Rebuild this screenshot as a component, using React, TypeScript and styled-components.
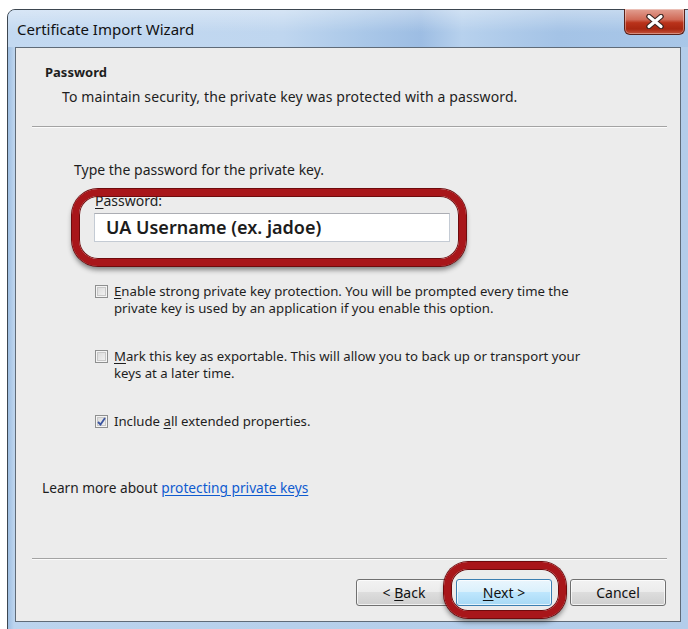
import styled, { createGlobalStyle } from "styled-components";

const GlobalStyle = createGlobalStyle`
  html, body {
    margin: 0;
    padding: 0;
    background: #ffffff;
    overflow: hidden;
  }
  body {
    font-family: "Noto Sans", "Open Sans", "DejaVu Sans", sans-serif;
    color: #1e1e1e;
  }
`;

const Frame = styled.div`
  position: relative;
  box-sizing: border-box;
  width: 690px;
  height: 630px;
  margin: 9px 0 0 7px;
  border: 1px solid #3d4650;
  border-radius: 8px 8px 0 0;
  background: linear-gradient(90deg, #9fbfe2 0px, #bcd4ee 6px, #b7d0eb 40%, #b3cdea 100%);
  display: flex;
  flex-direction: column;
  padding: 0 7px 0 7px;
`;

const TitleBar = styled.div`
  height: 37px;
  margin: 0 -7px;
  padding: 0 5px 0 9px;
  display: flex;
  justify-content: space-between;
  align-items: flex-start;
  border-radius: 7px 7px 0 0;
  background:
    linear-gradient(180deg, rgba(255, 255, 255, 0.35) 0%, rgba(255, 255, 255, 0) 60%),
    linear-gradient(
      90deg,
      #c3d9f1 0%,
      #bfd6ef 40%,
      #a9c7e8 52%,
      #9dbde3 60%,
      #b7d1ed 66%,
      #a4c3e6 80%,
      #a9c7e8 100%
    );
`;

const Title = styled.span`
  margin-top: 9px;
  font-size: 15px;
  line-height: 20px;
  color: #111;
`;

const CloseButton = styled.div`
  margin-top: -1px;
  margin-right: 6px;
  width: 61px;
  height: 26px;
  box-sizing: border-box;
  border: 1px solid #5a2119;
  border-top: none;
  border-radius: 0 0 6px 6px;
  background: linear-gradient(180deg, #e2a092 0%, #d06a57 42%, #b9321a 55%, #a82610 80%, #c4553e 100%);
  box-shadow: inset 0 0 0 1px rgba(255, 255, 255, 0.35);
  display: flex;
  align-items: center;
  justify-content: center;
`;

const Panel = styled.div`
  position: relative;
  box-sizing: border-box;
  width: 666px;
  height: 575px;
  border: 1px solid #5f6b78;
  background: #ececec;
  display: flex;
  flex-direction: column;
  font-size: 14px;
  line-height: 17px;
`;

const Heading = styled.div`
  margin: 15px 0 0 29px;
  font-weight: 700;
  font-size: 13px;
  line-height: 18px;
`;

const SubTitle = styled.div`
  margin: 7px 0 0 46px;
  line-height: 18px;
  letter-spacing: 0.12px;
`;

const Rule = styled.div<{ $gap?: number }>`
  margin: ${(p) => p.$gap ?? 0}px 13px 0 16px;
  height: 1px;
  background: #a3a3a3;
  border-bottom: 1px solid #fbfbfb;
`;

const Body = styled.div`
  display: flex;
  flex-direction: column;
  padding-left: 58px;
`;

const Prompt = styled.div`
  margin-top: 33px;
`;

const FieldLabel = styled.div`
  margin: 14px 0 0 21px;
`;

const TextBox = styled.div`
  margin: 4px 0 0 20px;
  box-sizing: border-box;
  width: 356px;
  height: 29px;
  border: 1px solid #c4cbd4;
  border-top-color: #abadb3;
  background: #ffffff;
  padding-left: 11px;
  display: flex;
  align-items: center;
  font-size: 18px;
  font-weight: 600;
  color: #1c1c1c;
`;

const Options = styled.div`
  margin: 41px 0 0 21px;
  display: flex;
  flex-direction: column;
  gap: 31px;
  font-size: 13.2px;
`;

const Option = styled.label`
  display: flex;
  align-items: flex-start;
  gap: 6px;
`;

const Box = styled.span`
  flex: none;
  margin-top: 2px;
  width: 13px;
  height: 13px;
  box-sizing: border-box;
  border: 1px solid #8e8f8f;
  background: linear-gradient(135deg, #d6d6d6, #f6f6f6);
  box-shadow: inset 0 0 0 1px #f4f4f4, inset 0 0 0 2px #c8c8c8;
  display: flex;
  align-items: center;
  justify-content: center;
`;

const Key = styled.span`
  text-decoration: underline;
  text-underline-offset: 2px;
`;

const LearnMore = styled.div`
  margin: 49px 0 0 26px;
  font-size: 13.7px;
`;

const Link = styled.a`
  color: #0f5bd0;
  text-decoration: underline;
  text-underline-offset: 2px;
`;

const Footer = styled.div`
  margin-top: auto;
  display: flex;
  flex-direction: column;
`;

const ButtonRow = styled.div`
  display: flex;
  justify-content: flex-end;
  gap: 4px;
  padding: 19px 14px 15px 0;
`;

const Button = styled.div<{ $primary?: boolean; $apart?: boolean }>`
  box-sizing: border-box;
  width: 96px;
  height: 27px;
  margin-left: ${(p) => (p.$apart ? "14px" : "0")};
  border: 1px solid ${(p) => (p.$primary ? "#3c7fb1" : "#707070")};
  border-radius: 3px;
  background: ${(p) =>
    p.$primary
      ? "linear-gradient(180deg, #eaf6fd 0%, #d9f0fc 50%, #bee6fd 50%, #a7d9f5 100%)"
      : "linear-gradient(180deg, #f2f2f2 0%, #ebebeb 50%, #dddddd 50%, #cfcfcf 100%)"};
  box-shadow: inset 0 0 0 1px rgba(255, 255, 255, 0.7);
  display: flex;
  align-items: center;
  justify-content: center;
  font-size: 14px;
  color: #111;
  white-space: pre;
`;

const Ring = styled.div<{ $left: number; $top: number; $w: number; $h: number; $r: number }>`
  position: absolute;
  left: ${(p) => p.$left}px;
  top: ${(p) => p.$top}px;
  width: ${(p) => p.$w}px;
  height: ${(p) => p.$h}px;
  box-sizing: border-box;
  border: 7px solid #a8161a;
  border-radius: ${(p) => p.$r}px;
  box-shadow:
    0 0 0 1px #6e0b0d,
    inset 0 0 0 1px #6e0b0d,
    0 4px 5px rgba(0, 0, 0, 0.45);
  pointer-events: none;
`;

const CloseGlyph = () => (
  <svg width="22" height="15" viewBox="0 0 22 15">
    <path d="M5 2.5 L17 12.5 M17 2.5 L5 12.5" stroke="#3b2420" strokeWidth="5.5" strokeLinecap="round" />
    <path d="M5 2.5 L17 12.5 M17 2.5 L5 12.5" stroke="#ffffff" strokeWidth="3.2" strokeLinecap="round" />
  </svg>
);

const Tick = () => (
  <svg width="9" height="9" viewBox="0 0 9 9">
    <path d="M1 5 L3.5 7.5 L8 1" fill="none" stroke="#3b55a0" strokeWidth="1.8" />
  </svg>
);

export default function App() {
  return (
    <>
      <GlobalStyle />
      <Frame>
        <TitleBar>
          <Title>Certificate Import Wizard</Title>
          <CloseButton>
            <CloseGlyph />
          </CloseButton>
        </TitleBar>
        <Panel>
          <Heading>Password</Heading>
          <SubTitle>To maintain security, the private key was protected with a password.</SubTitle>
          <Rule $gap={20} />
          <Body>
            <Prompt>Type the password for the private key.</Prompt>
            <FieldLabel>
              <Key>P</Key>assword:
            </FieldLabel>
            <TextBox>UA Username (ex. jadoe)</TextBox>
            <Options>
              <Option>
                <Box />
                <span>
                  <Key>E</Key>nable strong private key protection. You will be prompted every time the
                  <br />
                  private key is used by an application if you enable this option.
                </span>
              </Option>
              <Option>
                <Box />
                <span>
                  <Key>M</Key>ark this key as exportable. This will allow you to back up or transport your
                  <br />
                  keys at a later time.
                </span>
              </Option>
              <Option>
                <Box>
                  <Tick />
                </Box>
                <span>
                  Include <Key>a</Key>ll extended properties.
                </span>
              </Option>
            </Options>
          </Body>
          <LearnMore>
            Learn more about <Link href="#">protecting private keys</Link>
          </LearnMore>
          <Footer>
            <Rule />
            <ButtonRow>
              <Button>
                <span>
                  {"< "}
                  <Key>B</Key>ack
                </span>
              </Button>
              <Button $primary>
                <span>
                  <Key>N</Key>
                  {"ext >"}
                </span>
              </Button>
              <Button $apart>Cancel</Button>
            </ButtonRow>
          </Footer>
          <Ring $left={56} $top={141} $w={394} $h={77} $r={26} />
          <Ring $left={428} $top={514} $w={122} $h={56} $r={24} />
        </Panel>
      </Frame>
    </>
  );
}
